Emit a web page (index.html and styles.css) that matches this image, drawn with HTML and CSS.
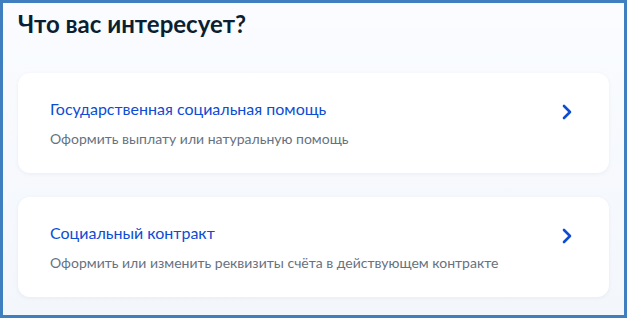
FILE: index.html
```html
<!DOCTYPE html>
<html lang="ru">
<head>
    <meta charset="UTF-8">
    <meta name="viewport" content="width=device-width, initial-scale=1.0">
    <title>Что вас интересует?</title>
    <link rel="stylesheet" href="styles.css">
</head>
<body>
    <div class="frame">
        <h2 class="title">Что вас интересует?</h2>
        <div class="list">
            <!-- Государственная социальная помощь -->
            <a class="card" href="#">
                <div class="card-text">
                    <div class="card-title">Государственная социальная помощь</div>
                    <div class="card-sub">Оформить выплату или натуральную помощь</div>
                </div>
                <svg class="chevron" width="10" height="16" viewBox="0 0 10 16">
                    <path d="M2 2l6 6-6 6" fill="none" stroke="#0d4cd3" stroke-width="2.6" stroke-linecap="round" stroke-linejoin="round"/>
                </svg>
            </a>

            <!-- Социальный контракт -->
            <a class="card" href="#">
                <div class="card-text">
                    <div class="card-title">Социальный контракт</div>
                    <div class="card-sub">Оформить или изменить реквизиты счёта в действующем контракте</div>
                </div>
                <svg class="chevron" width="10" height="16" viewBox="0 0 10 16">
                    <path d="M2 2l6 6-6 6" fill="none" stroke="#0d4cd3" stroke-width="2.6" stroke-linecap="round" stroke-linejoin="round"/>
                </svg>
            </a>
        </div>
    </div>
</body>
</html>
```

FILE: styles.css
```css
body {
    margin: 0;
    font-family: Lato, "Noto Sans", sans-serif;
}
.frame {
    box-sizing: border-box;
    width: 627px;
    height: 318px;
    border: 3px solid #3f7fc0;
    background: linear-gradient(#fafcff, #f3f6fb);
    padding: 5px 15px 0 15px;
    overflow: hidden;
}
.title {
    margin: 0 0 33px 0;
    font-size: 24px;
    line-height: 32px;
    font-weight: 700;
    color: #0b1f33;
}
.list {
    display: flex;
    flex-direction: column;
    gap: 24px;
}
.card {
    display: flex;
    align-items: center;
    justify-content: space-between;
    height: 100px;
    box-sizing: border-box;
    padding: 0 37px 0 32px;
    background: #fff;
    border-radius: 12px;
    box-shadow: 0 1px 4px rgba(30, 60, 120, 0.06);
    text-decoration: none;
}
.card-title {
    font-size: 16px;
    line-height: 24px;
    color: #0d4cd3;
    margin-bottom: 8px;
}
.card-sub {
    font-size: 14px;
    line-height: 20px;
    color: #66727f;
}
.chevron {
    margin-top: -22px;
}
```
